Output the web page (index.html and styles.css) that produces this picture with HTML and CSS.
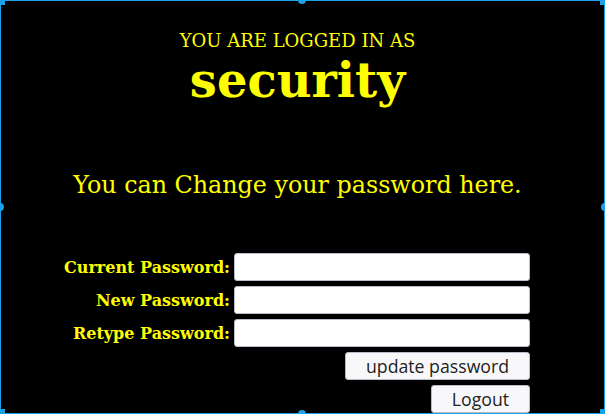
FILE: index.html
```html
<!DOCTYPE html>
<html>
<head>
<meta charset="utf-8">
<link rel="stylesheet" href="styles.css">
</head>
<body>
<div class="frame">
  <span class="handle h-top"></span>
  <span class="handle h-bottom"></span>
  <span class="handle h-left"></span>
  <span class="handle h-right"></span>
  <span class="corner c-tl"></span>
  <span class="corner c-tr"></span>
  <span class="corner c-bl"></span>
  <span class="corner c-br"></span>
  <div class="content">
    <div class="logged">YOU ARE LOGGED IN AS</div>
    <h1 class="user">security</h1>
    <p class="intro">You can Change your password here.</p>
    <form class="pwform">
      <label class="lbl" for="cur">Current Password:</label>
      <input class="field" id="cur" type="password">
      <label class="lbl" for="new">New Password:</label>
      <input class="field" id="new" type="password">
      <label class="lbl" for="re">Retype Password:</label>
      <input class="field" id="re" type="password">
      <div class="actions">
        <button type="button" class="btn btn-update">update password</button>
        <button type="button" class="btn btn-logout">Logout</button>
      </div>
    </form>
  </div>
</div>
</body>
</html>
```
FILE: styles.css
```css
html, body {
  margin: 0;
  padding: 0;
  background: #000;
}
.frame {
  position: relative;
  box-sizing: border-box;
  width: 605px;
  height: 414px;
  border: 1px solid #1ba1ea;
  background: #000;
  overflow: hidden;
  font-family: "DejaVu Serif", serif;
  color: #ffff00;
}
.handle {
  position: absolute;
  width: 8px;
  height: 8px;
  border-radius: 50%;
  background: #1ba1ea;
}
.h-top { top: -5px; left: 297px; }
.h-bottom { bottom: -5px; left: 297px; }
.h-left { left: -5px; top: 202px; }
.h-right { right: -5px; top: 202px; }
.corner {
  position: absolute;
  width: 4px;
  height: 4px;
  background: #1ba1ea;
}
.c-tl { top: 0; left: 0; }
.c-tr { top: 0; right: 0; }
.c-bl { bottom: 0; left: 0; }
.c-br { bottom: 0; right: 0; }
.content {
  display: flex;
  flex-direction: column;
  align-items: center;
  padding: 29px 10px 0 0;
}
.logged {
  font-size: 18px;
  line-height: 22px;
}
.user {
  margin: 0;
  font-size: 48px;
  line-height: 56px;
  font-weight: bold;
}
.intro {
  margin: 63px 0 0;
  font-size: 23.8px;
  line-height: 28px;
}
.pwform {
  align-self: flex-end;
  margin: 54px 64px 0 0;
  display: grid;
  grid-template-columns: auto 296px;
  column-gap: 4px;
  row-gap: 5px;
  align-items: center;
}
.lbl {
  text-align: right;
  font-weight: bold;
  font-size: 16px;
}
.field {
  box-sizing: border-box;
  height: 28px;
  margin: 0;
  border: 1px solid #b9bdc9;
  border-radius: 3px;
  background: #fff;
}
.actions {
  grid-column: 1 / 3;
  display: flex;
  flex-direction: column;
  align-items: flex-end;
  gap: 5px;
}
.btn {
  box-sizing: border-box;
  height: 28px;
  margin: 0;
  padding: 0;
  white-space: nowrap;
  border: 1px solid #b9bdc9;
  border-radius: 3px;
  background: #f8f8fa;
  color: #222;
  font-family: "Open Sans", sans-serif;
  font-size: 17.7px;
}
.btn-update { width: 185px; }
.btn-logout { width: 99px; }
```
